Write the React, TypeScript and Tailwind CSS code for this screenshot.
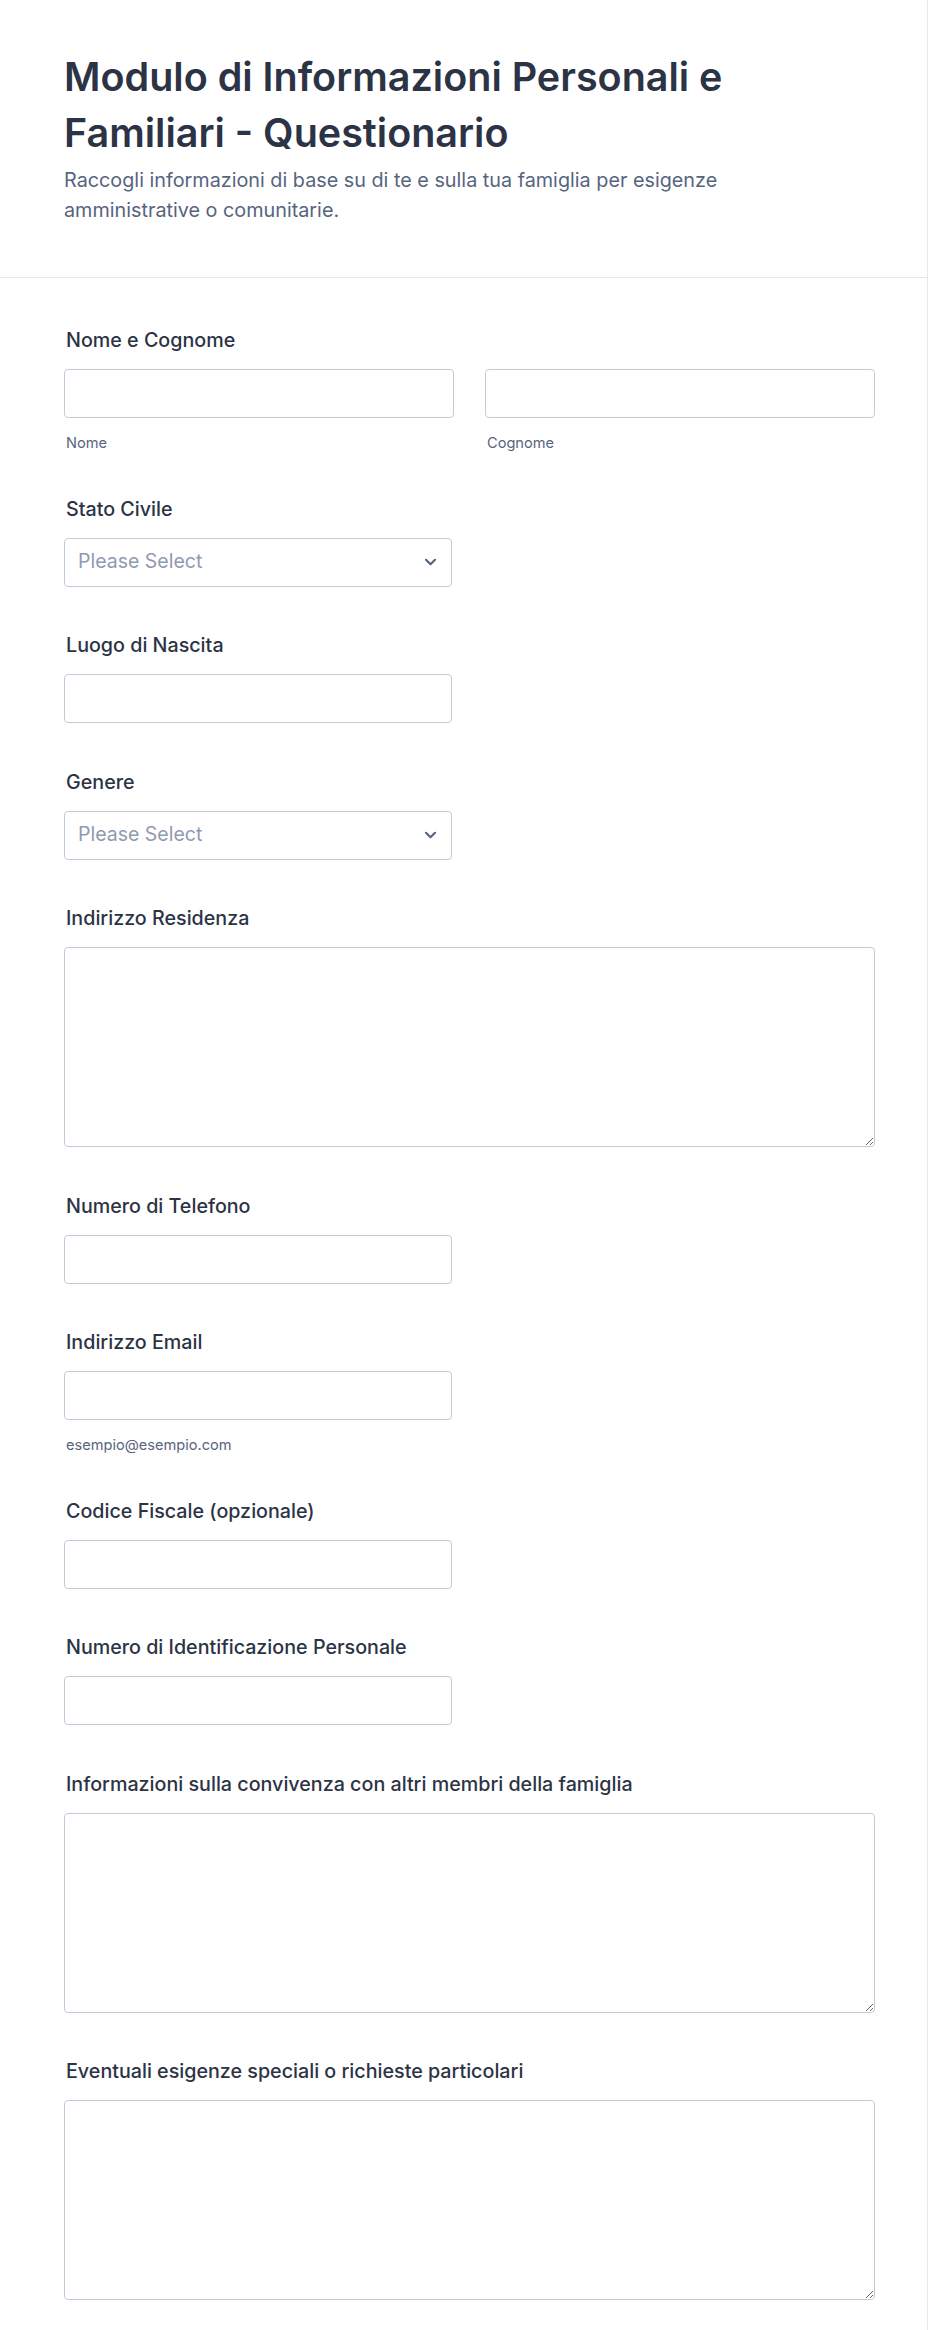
import React from 'react';

const font = { fontFamily: 'Inter, "Noto Sans", sans-serif' };

function Label({ children }: { children: React.ReactNode }) {
  return <label className="block pl-[2px] text-[19.7px] leading-6 font-medium text-[#2c3345]">{children}</label>;
}

function Input({ wide }: { wide?: boolean }) {
  return (
    <input
      type="text"
      className={`mt-[17px] block h-[49px] rounded-[4px] border border-[#c3cad8] bg-white px-3 outline-none ${wide ? 'w-full' : 'w-[388px]'}`}
    />
  );
}

function Select() {
  return (
    <div className="relative mt-[17px] h-[49px] w-[388px] rounded-[4px] border border-[#c3cad8] bg-white">
      <div className="flex h-full items-center justify-between pl-[13px] pr-[14px]">
        <span className="text-[19.5px] text-[#8f9ab0]">Please Select</span>
        <svg width="13" height="8" viewBox="0 0 13 8" fill="none">
          <path d="M2 1.8l4.5 4.4 4.5-4.4" stroke="#57647e" strokeWidth="2.2" strokeLinecap="round" strokeLinejoin="round" />
        </svg>
      </div>
    </div>
  );
}

function TextArea() {
  return (
    <textarea className="mt-[17px] block h-[200px] w-full rounded-[4px] border border-[#c3cad8] bg-white px-3 py-2 outline-none" />
  );
}

function Sub({ children }: { children: React.ReactNode }) {
  return <div className="mt-[16px] -mb-[2px] pl-[2px] text-[14.6px] leading-[18px] text-[#57647e]">{children}</div>;
}

export default function App() {
  return (
    <div className="w-[928px] min-h-[2329px] border-r border-b border-[#e6e8ee] bg-white" style={font}>
      {/* Header */}
      <div className="border-b border-[#e3e6ec] pl-[64px] pt-[49px] pb-[52px]">
        <h1 className="max-w-[700px] text-[39.5px] leading-[56px] font-semibold text-[#2c3345]">
          Modulo di Informazioni Personali e Familiari - Questionario
        </h1>
        <p className="mt-[4px] max-w-[700px] text-[19.8px] leading-[30px] text-[#57647e]">
          Raccogli informazioni di base su di te e sulla tua famiglia per esigenze amministrative o comunitarie.
        </p>
      </div>

      {/* Fields */}
      <div className="flex w-[875px] flex-col gap-[46.5px] pl-[64px] pt-[50px] pb-[30px]">
        <div>
          <Label>Nome e Cognome</Label>
          <div className="mt-[17px] grid grid-cols-2 gap-[31px]">
            <div>
              <input className="block h-[49px] w-full rounded-[4px] border border-[#c3cad8] bg-white px-3 outline-none" />
              <Sub>Nome</Sub>
            </div>
            <div>
              <input className="block h-[49px] w-full rounded-[4px] border border-[#c3cad8] bg-white px-3 outline-none" />
              <Sub>Cognome</Sub>
            </div>
          </div>
        </div>

        <div>
          <Label>Stato Civile</Label>
          <Select />
        </div>

        <div>
          <Label>Luogo di Nascita</Label>
          <Input />
        </div>

        <div>
          <Label>Genere</Label>
          <Select />
        </div>

        <div>
          <Label>Indirizzo Residenza</Label>
          <TextArea />
        </div>

        <div>
          <Label>Numero di Telefono</Label>
          <Input />
        </div>

        <div>
          <Label>Indirizzo Email</Label>
          <Input />
          <Sub>esempio@esempio.com</Sub>
        </div>

        <div>
          <Label>Codice Fiscale (opzionale)</Label>
          <Input />
        </div>

        <div>
          <Label>Numero di Identificazione Personale</Label>
          <Input />
        </div>

        <div>
          <Label>Informazioni sulla convivenza con altri membri della famiglia</Label>
          <TextArea />
        </div>

        <div>
          <Label>Eventuali esigenze speciali o richieste particolari</Label>
          <TextArea />
        </div>
      </div>
    </div>
  );
}
